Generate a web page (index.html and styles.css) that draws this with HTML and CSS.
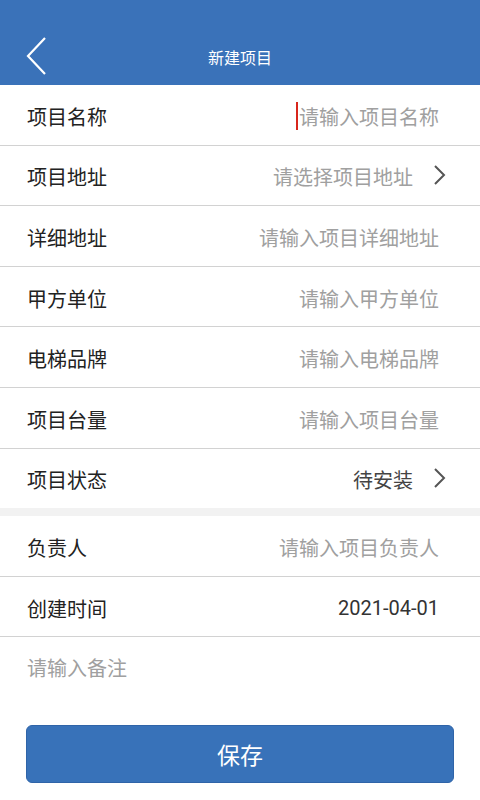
FILE: index.html
```html
<!DOCTYPE html>
<html lang="zh-CN">
<head>
  <meta charset="UTF-8" />
  <title>新建项目</title>
  <meta name="viewport" content="width=device-width, initial-scale=1.0"/>
  <link rel="stylesheet" href="styles.css">
</head>
<body>
  <div class="header">
    <svg class="back" width="24" height="40" viewBox="0 0 24 40">
      <polyline points="19,3 2,21 19,39" fill="none" stroke="#fff" stroke-width="2.2"/>
    </svg>
    <div class="title">新建项目</div>
  </div>

  <div class="group">
    <div class="row">
      <span class="label">项目名称</span>
      <span class="value placeholder"><span class="cursor"></span>请输入项目名称</span>
    </div>
    <div class="row has-arrow">
      <span class="label">项目地址</span>
      <span class="value placeholder">请选择项目地址</span>
      <svg class="arrow" width="14" height="22" viewBox="0 0 14 22">
        <polyline points="2,2 11,11 2,20" fill="none" stroke="#555" stroke-width="2"/>
      </svg>
    </div>
    <div class="row">
      <span class="label">详细地址</span>
      <span class="value placeholder">请输入项目详细地址</span>
    </div>
    <div class="row">
      <span class="label">甲方单位</span>
      <span class="value placeholder">请输入甲方单位</span>
    </div>
    <div class="row">
      <span class="label">电梯品牌</span>
      <span class="value placeholder">请输入电梯品牌</span>
    </div>
    <div class="row">
      <span class="label">项目台量</span>
      <span class="value placeholder">请输入项目台量</span>
    </div>
    <div class="row has-arrow last">
      <span class="label">项目状态</span>
      <span class="value">待安装</span>
      <svg class="arrow" width="14" height="22" viewBox="0 0 14 22">
        <polyline points="2,2 11,11 2,20" fill="none" stroke="#555" stroke-width="2"/>
      </svg>
    </div>
  </div>

  <div class="gap"></div>

  <div class="group">
    <div class="row">
      <span class="label">负责人</span>
      <span class="value placeholder">请输入项目负责人</span>
    </div>
    <div class="row">
      <span class="label">创建时间</span>
      <span class="value date">2021-04-01</span>
    </div>
    <div class="remark">请输入备注</div>
  </div>

  <button class="save">保存</button>
</body>
</html>
```

FILE: styles.css
```css
body { margin: 0; background: #fff; font-family: "Noto Sans CJK SC", "Noto Sans", sans-serif; color: #222; }
.header {
  height: 85px; background: #3a72b9; color: #fff;
  display: flex; align-items: center; justify-content: center; position: relative;
}
.header .title { font-size: 16px; padding-top: 28px; }
.header .back { position: absolute; left: 26px; top: 35px; }

.row {
  height: 59.6px; border-bottom: 1px solid #d2d2d2; box-sizing: content-box;
  display: flex; align-items: center; padding: 0 41px 0 27px;
}
.row .label, .row .value { position: relative; top: 1.5px; }
.row.last { border-bottom: none; }
.row.has-arrow { padding-right: 33px; }
.label { font-size: 20px; color: #222; flex: 1; }
.value { font-size: 20px; color: #444; display: flex; align-items: center; }
.value.placeholder { color: #a0a0a0; }
.value.date { font-family: Roboto, "Noto Sans", sans-serif; color: #333; }
.cursor { width: 2px; height: 28px; background: #d8261c; margin-right: 1px; }
.arrow { margin-left: 20px; }

.gap { height: 8px; background: #f2f2f2; }

.remark { font-size: 20px; color: #a0a0a0; padding: 16px 27px 0; height: 55px; }

.save {
  display: block; margin: 17px 26px 0; width: 428px; height: 58px;
  background: #3872b9; color: #fff; border: 1px solid #2f64a8; border-radius: 6px;
  font-size: 23px; font-family: "Noto Sans CJK SC", sans-serif;
}
```
